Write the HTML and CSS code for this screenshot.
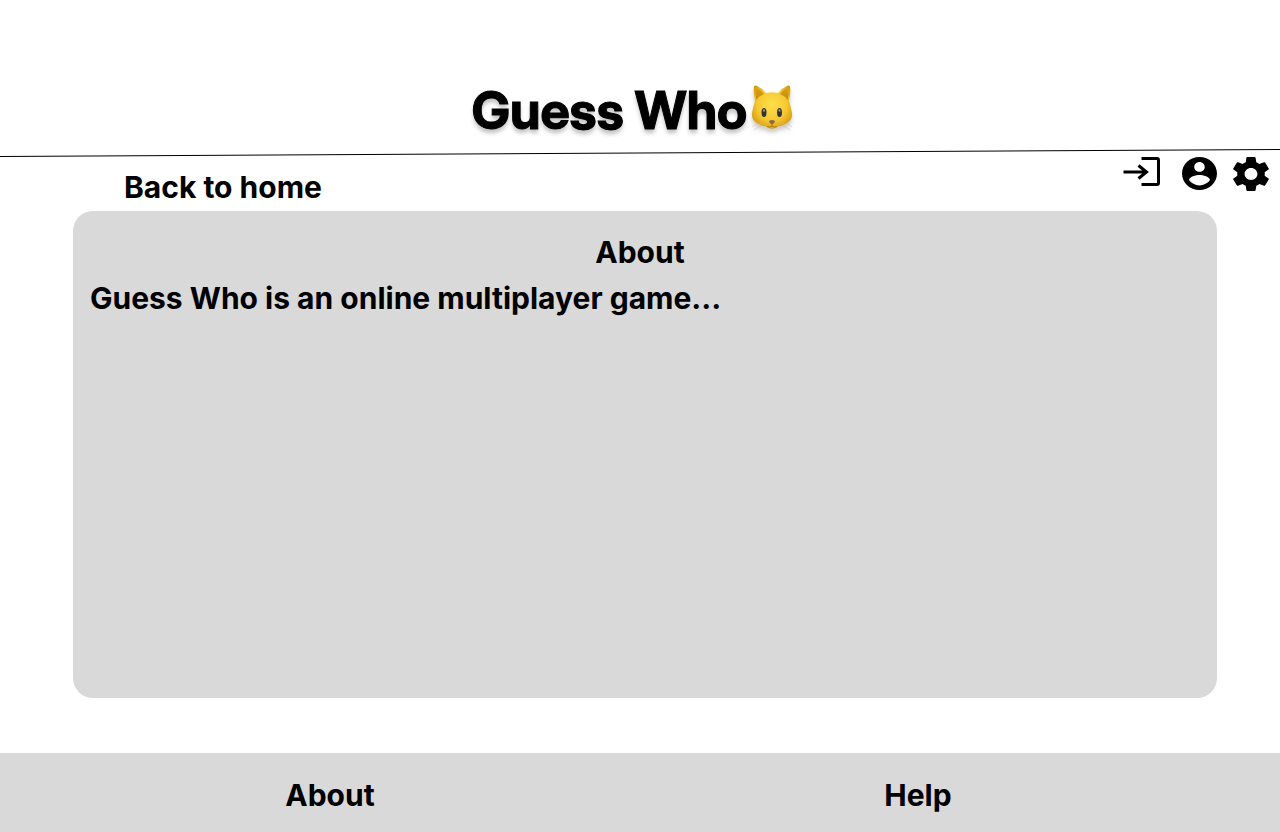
FILE: index.html
```html
<!DOCTYPE html>
<html lang="en">
<head>
<meta charset="utf-8">
<title>Guess Who - About</title>
<meta name="viewport" content="width=device-width, initial-scale=1">
<link rel="stylesheet" href="styles.css">
</head>
<body>
<header class="masthead">
  <h1 class="title">Guess Who</h1>
  <svg class="cat" viewBox="0 0 42 46" role="img" aria-label="Cat face">
    <defs>
      <radialGradient id="fur" cx="0.5" cy="0.45" r="0.6">
        <stop offset="0" stop-color="#ffdf4c"/>
        <stop offset="0.6" stop-color="#f6c931"/>
        <stop offset="1" stop-color="#d39a10"/>
      </radialGradient>
      <linearGradient id="ear" x1="0" y1="0" x2="0" y2="1">
        <stop offset="0" stop-color="#d9a014"/>
        <stop offset="1" stop-color="#c48c0c"/>
      </linearGradient>
    </defs>
    <path d="M4 16Q2 7 3 1.500Q3.500 0 5 0.500Q11 3 15 8Q21 6.500 27 8Q31 3 37 0.500Q38.500 0 39 1.500Q40 7 38 16Q40 22 41 28C42 36 35 40 27 41.500Q21 46 15 41.500C7 40 0 36 1 28Q2 22 4 16Z" fill="url(#fur)"/>
    <path d="M5 3Q10 5 13 9Q8 11 5.500 15Q4 8 5 3ZM37 3Q32 5 29 9Q34 11 36.500 15Q38 8 37 3Z" fill="url(#ear)"/>
    <g stroke="#c9b58b" stroke-width="0.500" fill="none"><path d="M11 38Q5 38 1 42M12 40Q7 41 3 45M31 38Q37 38 41 42M30 40Q35 41 39 45"/></g>
    <ellipse cx="13" cy="27.500" rx="2.500" ry="4.500" fill="#343338"/>
    <ellipse cx="28.500" cy="27.500" rx="2.500" ry="4.500" fill="#343338"/>
    <ellipse cx="13" cy="25.500" rx="0.900" ry="1.300" fill="#a3a3a3"/>
    <ellipse cx="28.500" cy="25.500" rx="0.900" ry="1.300" fill="#a3a3a3"/>
    <path d="M18 36Q21 34 24 36Q24 38 21 39.500Q18 38 18 36Z" fill="#8b684b"/>
    <path d="M21 39V41M16 41.500Q19 43 21 41Q23 43 26 41.500" fill="none" stroke="#b37b0b"/>
  </svg>
</header>
<svg class="rule" viewBox="0 0 1280 8" preserveAspectRatio="none" aria-hidden="true"><path d="M0 7.500L1280 0.500" stroke="#000"/></svg>
<nav class="toolbar" aria-label="Main">
  <a class="back" href="#">Back to home</a>
  <div class="actions">
    <button class="icon login" aria-label="Log in"><svg viewBox="0 0 37 29"><path d="M18.500 1.500H34Q35.500 1.500 35.500 3V26Q35.500 27.500 34 27.500H18.500M0.500 15H23M15.500 8.500L23.500 15L15.500 21.500" fill="none" stroke="#000" stroke-width="3"/></svg></button>
    <button class="icon account" aria-label="Account"><svg viewBox="2 2 20 20" preserveAspectRatio="none"><path d="M12 2C6.480 2 2 6.480 2 12s4.480 10 10 10 10-4.480 10-10S17.520 2 12 2zm0 3c1.660 0 3 1.340 3 3s-1.340 3-3 3-3-1.340-3-3 1.340-3 3-3zm0 14.200c-2.500 0-4.710-1.280-6-3.220.03-1.990 4-3.080 6-3.080 1.990 0 5.970 1.090 6 3.080-1.290 1.940-3.500 3.220-6 3.220z"/></svg></button>
    <button class="icon settings" aria-label="Settings"><svg viewBox="2.200 2 19.600 20" preserveAspectRatio="none"><path d="M19.430 12.980c.04-.32.07-.64.07-.98s-.03-.66-.07-.98l2.110-1.650c.19-.15.24-.42.12-.64l-2-3.460c-.12-.22-.39-.3-.61-.22l-2.490 1c-.52-.4-1.080-.73-1.690-.98l-.38-2.650C14.460 2.180 14.250 2 14 2h-4c-.25 0-.46.180-.49.420l-.38 2.650c-.61.250-1.170.590-1.690.980l-2.490-1c-.23-.09-.49 0-.61.220l-2 3.460c-.13.220-.07.490.12.640l2.110 1.650c-.04.320-.07.650-.07.980s.03.660.07.980l-2.110 1.650c-.19.150-.24.420-.12.640l2 3.460c.12.220.39.300.61.220l2.490-1c.52.400 1.080.730 1.690.980l.38 2.650c.03.240.24.420.49.420h4c.25 0 .46-.18.49-.42l.38-2.650c.61-.25 1.170-.59 1.690-.98l2.490 1c.23.090.49 0 .61-.22l2-3.460c.12-.22.070-.49-.12-.64l-2.110-1.650zM12 15.500c-1.930 0-3.500-1.570-3.500-3.500s1.570-3.500 3.500-3.500 3.500 1.570 3.500 3.500-1.570 3.500-3.500 3.500z"/></svg></button>
  </div>
</nav>
<main class="panel">
  <h2 class="heading">About</h2>
  <p class="copy">Guess Who is an online multiplayer game...</p>
</main>
<footer class="footer">
  <a href="#">About</a>
  <a href="#">Help</a>
</footer>
</body>
</html>
```
FILE: styles.css
```css
* { box-sizing: border-box; }
body {
  margin: 0;
  min-height: 100vh;
  display: flex;
  flex-direction: column;
  background: #fff;
  color: #000;
  font: 700 30px/36px Inter, sans-serif;
}
a { color: inherit; text-decoration: none; }
.masthead {
  display: flex;
  justify-content: center;
  gap: 4px;
  padding: 79px 15px 6px 0;
}
.title {
  margin: 0;
  font-family: "Inter Display", Inter, sans-serif;
  font-size: 52px;
  line-height: 64px;
  font-weight: 700;
  font-variation-settings: "opsz" 32;
  -webkit-text-stroke: 1px #000;
  text-shadow: 0 4px 4px rgba(0, 0, 0, 0.25);
}
.cat {
  width: 42px;
  height: 46px;
  margin-top: 6px;
  filter: drop-shadow(0 4px 2px rgba(0, 0, 0, 0.2));
}
.rule { display: block; width: 100%; height: 8px; }
.toolbar {
  display: flex;
  justify-content: space-between;
  height: 54px;
  padding: 0 11px 0 124px;
}
.back { margin-top: 12px; }
.actions { display: flex; align-items: flex-start; }
.icon { display: block; border: 0; padding: 0; background: none; cursor: pointer; }
.icon svg { display: block; width: 100%; height: 100%; }
.login { width: 37px; height: 29px; margin-right: 22px; }
.account { width: 35px; height: 33px; margin-right: 16px; }
.settings { width: 36px; height: 34px; }
.panel {
  flex: 1;
  margin: 0 63px 55px 73px;
  padding: 23px 17px;
  background: #d9d9d9;
  border-radius: 20px;
}
.heading { margin: 0 0 10px; padding-right: 10px; font: inherit; text-align: center; }
.copy { margin: 0; }
.footer {
  display: grid;
  grid-template-columns: 1fr 1fr;
  justify-items: center;
  padding: 24px 68px 19px 36px;
  background: #d9d9d9;
}
```
